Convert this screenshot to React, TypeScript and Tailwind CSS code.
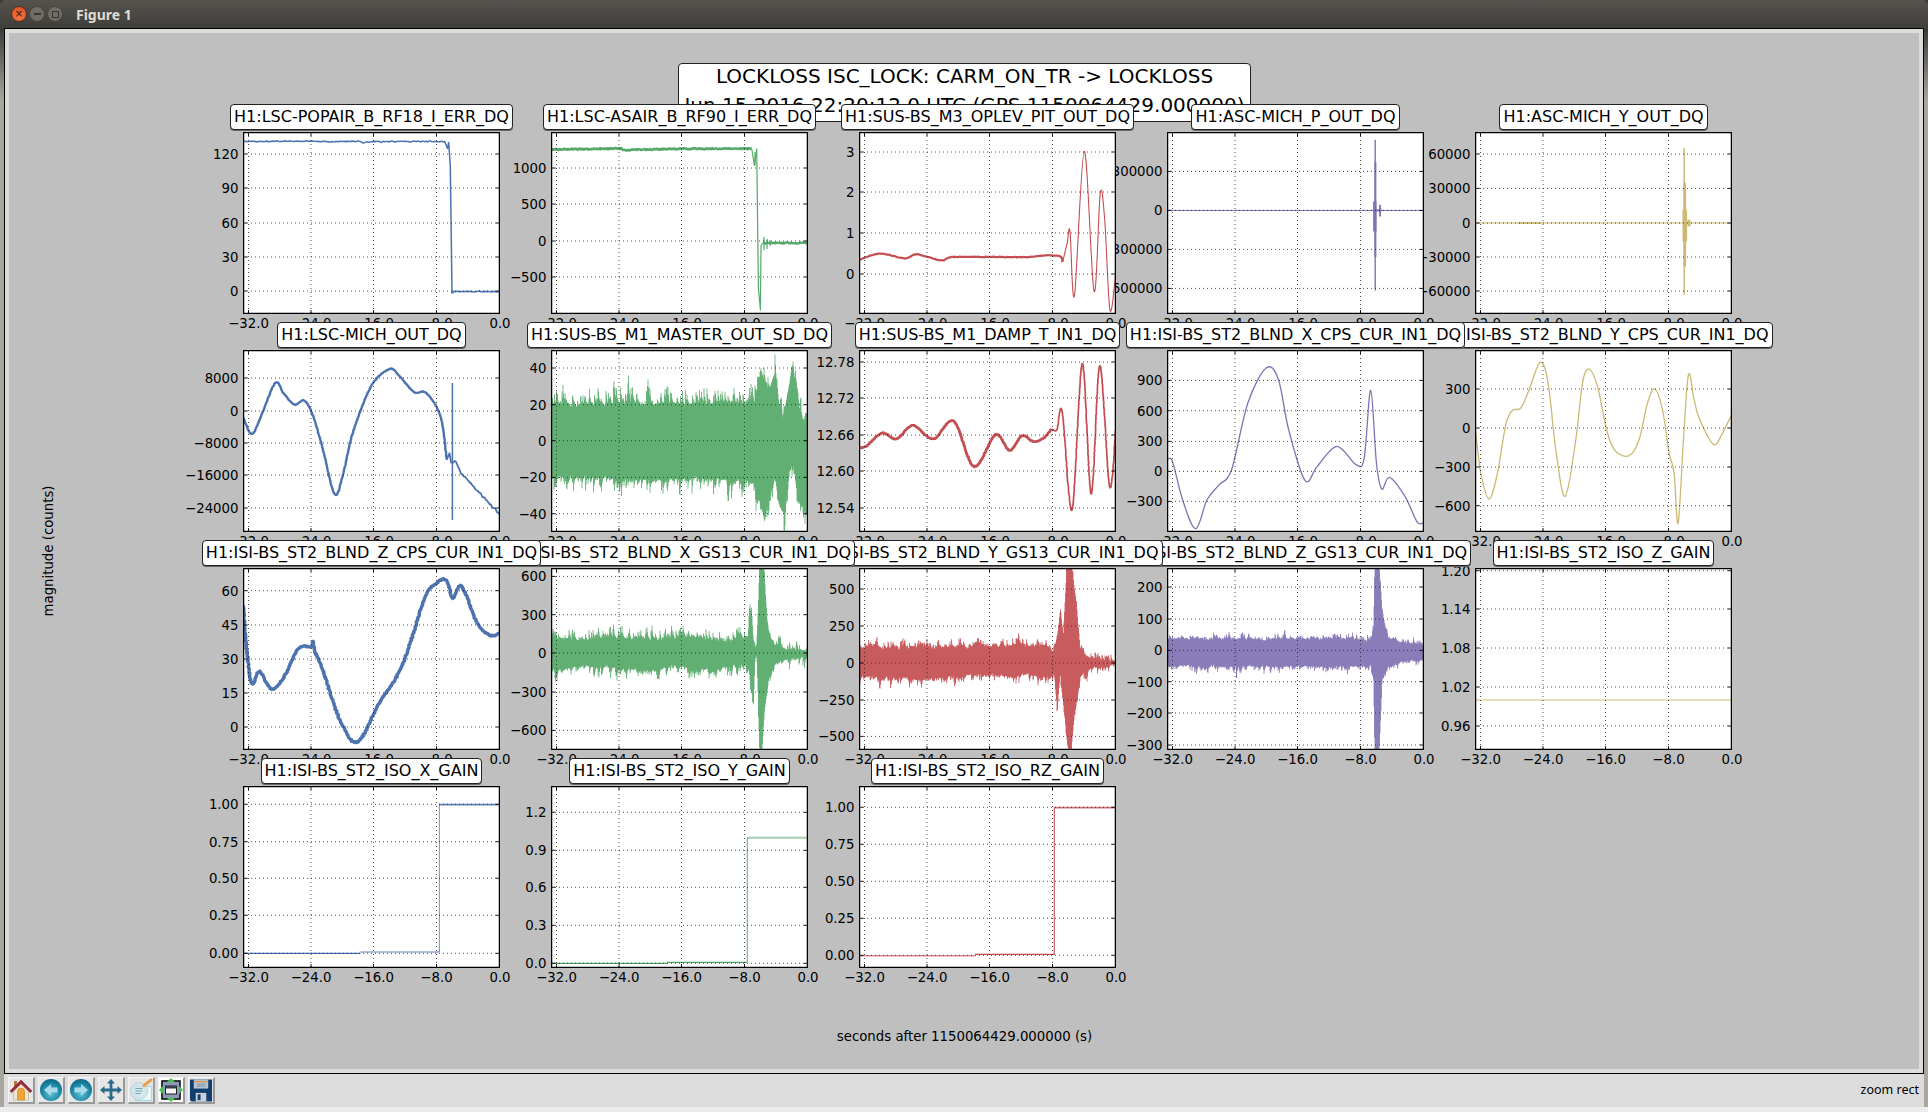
import React from "react";

type P = [number, number];
type Stroke = { d: string; w: number; o?: number };
type Ax = {
  title: string;
  color: string;
  z: string;
  yt: [string, number][];
  tr: Stroke[];
};

const W = 257;
const H = 182;
const XT: [string, number][] = [
  ["−32.0", 5.5],
  ["−24.0", 68],
  ["−16.0", 130.5],
  ["−8.0", 193.5],
  ["0.0", 257],
];

function rng(seed: number) {
  let a = seed >>> 0;
  return () => {
    a = (a + 0x6d2b79f5) >>> 0;
    let t = a;
    t = Math.imul(t ^ (t >>> 15), t | 1);
    t ^= t + Math.imul(t ^ (t >>> 7), t | 61);
    return ((t ^ (t >>> 14)) >>> 0) / 4294967296;
  };
}
const zp = (sx: number, ox: number, oy: number, pts: P[]): P[] =>
  pts.map(([x, y]) => [x / sx + ox, y / 3 + oy] as P);
const f = (n: number) => n.toFixed(2);
function smooth(pts: P[]) {
  let d = `M${f(pts[0][0])} ${f(pts[0][1])}`;
  for (let i = 0; i < pts.length - 1; i++) {
    const p0 = pts[Math.max(i - 1, 0)];
    const p1 = pts[i];
    const p2 = pts[i + 1];
    const p3 = pts[Math.min(i + 2, pts.length - 1)];
    d += `C${f(p1[0] + (p2[0] - p0[0]) / 6)} ${f(p1[1] + (p2[1] - p0[1]) / 6)} ${f(p2[0] - (p3[0] - p1[0]) / 6)} ${f(p2[1] - (p3[1] - p1[1]) / 6)} ${f(p2[0])} ${f(p2[1])}`;
  }
  return d;
}
const poly = (pts: P[]) => "M" + pts.map((p) => `${f(p[0])} ${f(p[1])}`).join("L");
function rough(pts: P[], amp: number, seed: number) {
  const r = rng(seed);
  const out: P[] = [];
  for (let i = 0; i < pts.length - 1; i++) {
    const p0 = pts[Math.max(i - 1, 0)];
    const p1 = pts[i];
    const p2 = pts[i + 1];
    const p3 = pts[Math.min(i + 2, pts.length - 1)];
    const c1: P = [p1[0] + (p2[0] - p0[0]) / 6, p1[1] + (p2[1] - p0[1]) / 6];
    const c2: P = [p2[0] - (p3[0] - p1[0]) / 6, p2[1] - (p3[1] - p1[1]) / 6];
    const n = Math.max(2, Math.ceil(Math.hypot(p2[0] - p1[0], p2[1] - p1[1]) / 1.2));
    for (let j = 0; j < n; j++) {
      const t = j / n;
      const u = 1 - t;
      const x = u * u * u * p1[0] + 3 * u * u * t * c1[0] + 3 * u * t * t * c2[0] + t * t * t * p2[0];
      const y = u * u * u * p1[1] + 3 * u * u * t * c1[1] + 3 * u * t * t * c2[1] + t * t * t * p2[1];
      out.push([x + (r() - 0.5) * amp, y + (r() - 0.5) * amp]);
    }
  }
  out.push(pts[pts.length - 1]);
  return poly(out);
}
function interp(k: P[], x: number) {
  if (x <= k[0][0]) return k[0][1];
  for (let i = 0; i < k.length - 1; i++) {
    if (x <= k[i + 1][0]) {
      const t = (x - k[i][0]) / (k[i + 1][0] - k[i][0] || 1);
      return k[i][1] + (k[i + 1][1] - k[i][1]) * t;
    }
  }
  return k[k.length - 1][1];
}
function jitter(pts: P[], amp: number, seed: number) {
  const r = rng(seed);
  const out: P[] = [];
  for (let i = 0; i < pts.length - 1; i++) {
    const [x0, y0] = pts[i];
    const [x1, y1] = pts[i + 1];
    const n = Math.max(1, Math.floor(Math.abs(x1 - x0)));
    for (let j = 0; j < n; j++) {
      const t = j / n;
      out.push([x0 + (x1 - x0) * t, y0 + (y1 - y0) * t + (r() - 0.5) * amp]);
    }
  }
  out.push(pts[pts.length - 1]);
  return poly(out);
}
function band(seed: number, top: P[], bot: P[], sT: number, sB: number, base: number, wobble: number) {
  const r = rng(seed);
  let d = "";
  let tw = 0;
  let bw = 0;
  let sl = 0;
  let sl2 = 0;
  for (let x = 0; x <= W; x += 0.5) {
    tw = tw * 0.55 + Math.pow(r(), 6) * 1.1;
    bw = bw * 0.55 + Math.pow(r(), 6) * 1.1;
    sl = sl * 0.97 + (r() - 0.5) * 0.6;
    sl2 = sl2 * 0.97 + (r() - 0.5) * 0.6;
    const t0 = interp(top, x);
    const b0 = interp(bot, x);
    const scale = Math.min(1, (b0 - t0) / 30) * wobble;
    const t = t0 - tw * sT - (r() - 0.5) * base - sl * scale;
    const b = b0 + bw * sB + (r() - 0.5) * base + sl2 * scale;
    d += `M${x} ${f(t)}V${f(b)}`;
  }
  return d;
}

const a3 = zp(2.45, -219.6, -82.3, [
  [538, 630], [590, 612], [650, 626], [680, 614], [740, 632], [770, 622], [900, 622], [950, 622], [1000, 617], [1030, 620], [1037, 637], [1048, 580], [1055, 545], [1066, 737], [1090, 305], [1114, 725], [1129, 432], [1140, 510], [1153, 782], [1168, 660],
]);
const a6a = zp(2.45, -43.3, -20.3, [
  [100, 250], [107, 265], [128, 313], [150, 260], [185, 160], [205, 190], [232, 225], [255, 212], [275, 250], [300, 350], [330, 492], [350, 440], [375, 310], [420, 170], [465, 118], [490, 140], [525, 187], [555, 190], [590, 260], [605, 390],
]);
const a6b = zp(2.45, -43.3, -20.3, [[605, 390], [612, 370], [616, 398], [628, 396], [640, 430], [738, 558]]);
const a8a = zp(2.45, -19.6, -20.3, [
  [46, 353], [65, 350], [105, 310], [140, 328], [180, 287], [230, 328], [280, 275], [330, 410], [382, 315], [417, 362], [447, 318], [475, 335], [500, 325], [520, 298],
]);
const a8b = zp(2.45, -19.6, -20.3, [
  [520, 298], [533, 300], [546, 247], [570, 540], [595, 102], [617, 492], [638, 108], [662, 470], [677, 300],
]);
const a9 = zp(2.45, -327.3, -20.3, [
  [801, 392], [815, 395], [840, 510], [872, 597], [900, 510], [930, 465], [960, 420], [1000, 220], [1045, 115], [1075, 150], [1100, 300], [1140, 452], [1170, 410], [1218, 350], [1265, 405], [1285, 385], [1301, 182], [1315, 400], [1328, 478], [1347, 443], [1385, 500], [1415, 577], [1432, 578],
]);
const a10 = zp(3, -14.2, -10.3, [
  [45, 280], [60, 400], [85, 478], [110, 400], [135, 255], [155, 212], [180, 205], [205, 150], [238, 68], [262, 130], [285, 330], [313, 470], [345, 300], [365, 130], [385, 88], [410, 140], [440, 280], [465, 335], [505, 348], [535, 300], [560, 190], [582, 148], [605, 210], [625, 340], [640, 400], [652, 550], [668, 300], [683, 105], [700, 180], [715, 235], [758, 314], [785, 280], [814, 222],
]);
const a11 = zp(2.45, -43.3, -28.3, [
  [107, 200], [112, 290], [127, 430], [147, 395], [175, 448], [205, 415], [240, 330], [265, 320], [275, 322], [278, 305], [282, 335], [300, 385], [340, 530], [385, 608], [440, 490], [495, 380], [550, 180], [575, 135], [603, 120], [620, 175], [642, 140], [680, 250], [712, 287], [738, 278],
]);

const g7 = (p: P[]) => zp(2.45, 200 - 551.4, -20.3, p);
const g12 = (p: P[]) => zp(2.45, 200 - 551.4, -28.3, p);
const g13 = (p: P[]) => zp(1.742, 840 - 859.6, -28.3, p);
const g14 = (p: P[]) => zp(1.742, 840 - 1167.3, -28.3, p);

const AXES: Ax[] = [
  {
    title: "H1:LSC-POPAIR_B_RF18_I_ERR_DQ", color: "#4c72b0", z: "z-[44]",
    yt: [["120", 22], ["90", 56], ["60", 91], ["30", 125], ["0", 159]],
    tr: [{ d: jitter([[0, 9.6], [60, 9], [80, 9.5], [118, 9.4], [120, 10.8], [130, 9.5], [137, 9.4], [138, 10.8], [140, 9.6], [201.6, 9.4], [204.5, 16.7], [205.7, 10.4], [207.3, 34], [209, 161], [211, 159.4], [257, 159.6]], 1, 3), w: 1.5 }],
  },
  {
    title: "H1:LSC-ASAIR_B_RF90_I_ERR_DQ", color: "#55a868", z: "z-[43]",
    yt: [["1000", 36], ["500", 72], ["0", 109], ["−500", 145]],
    tr: [
      { d: jitter([[0, 17.5], [70, 16.5], [73, 18], [130, 16.8], [200.8, 16.7]], 1.2, 5), w: 2.6 },
      { d: poly([[200.8, 17], [203.3, 33], [205.7, 17], [207.4, 156], [209.4, 178], [210, 114], [212, 111]]), w: 1.2 },
      { d: jitter([[212, 111], [257, 111]], 1.2, 7), w: 2.4 },
      { d: "M204 20V34M213 105V118M216 107V117M219 108V114", w: 1.2 },
    ],
  },
  {
    title: "H1:SUS-BS_M3_OPLEV_PIT_OUT_DQ", color: "#c44e52", z: "z-[42]",
    yt: [["3", 20], ["2", 60], ["1", 101], ["0", 142]],
    tr: [{ d: rough(a3.slice(0, 11), 0.6, 9), w: 2.2 }, { d: smooth(a3.slice(10)), w: 1.1 }],
  },
  {
    title: "H1:ASC-MICH_P_OUT_DQ", color: "#8172b2", z: "z-[41]",
    yt: [["300000", 39.4], ["0", 78.4], ["−300000", 117.4], ["−600000", 156.4]],
    tr: [
      { d: "M0 78.4H257", w: 1 },
      { d: "M208.2 7.7V158.4", w: 1.4 },
      { d: "M208.4 30V125", w: 2 },
      { d: "M207.8 69.4V99.4", w: 3.4 },
      { d: "M213 72.7V84.4", w: 1.8 },
      { d: "M209 78.4H215", w: 2 },
    ],
  },
  {
    title: "H1:ASC-MICH_Y_OUT_DQ", color: "#ccb974", z: "z-[40]",
    yt: [["60000", 22], ["30000", 56.4], ["0", 91], ["−30000", 125], ["−60000", 159]],
    tr: [
      { d: "M0 91H257", w: 1 },
      { d: "M43 91H66", w: 1.6 },
      { d: "M209.2 16V162.7", w: 1.5 },
      { d: "M209.8 51V134.4", w: 2.6 },
      { d: "M209.8 77.7V109.4", w: 4.6 },
      { d: "M214 87.7V94.4", w: 3 },
    ],
  },
  {
    title: "H1:LSC-MICH_OUT_DQ", color: "#4c72b0", z: "z-[39]",
    yt: [["8000", 28], ["0", 61], ["−8000", 93], ["−16000", 125], ["−24000", 158]],
    tr: [
      { d: rough(a6a, 0.5, 13), w: 2.4 },
      { d: jitter(a6b, 2, 11), w: 1.8 },
      { d: "M209.4 33V170", w: 1.5 },
    ],
  },
  {
    title: "H1:SUS-BS_M1_MASTER_OUT_SD_DQ", color: "#55a868", z: "z-[38]",
    yt: [["40", 18], ["20", 54.7], ["0", 90.7], ["−20", 127.4], ["−40", 163.7]],
    tr: [{
      d: band(21,
        g7([[862, 228], [1340, 224], [1360, 222], [1375, 125], [1395, 195], [1410, 135], [1420, 235], [1430, 290], [1440, 210], [1452, 125], [1465, 195], [1475, 295], [1487, 255]]),
        g7([[862, 440], [1340, 445], [1360, 465], [1385, 565], [1400, 460], [1410, 430], [1420, 520], [1432, 545], [1445, 420], [1455, 385], [1465, 500], [1480, 535], [1487, 520]]),
        16, 16, 2, 2), w: 0.8,
    }],
  },
  {
    title: "H1:SUS-BS_M1_DAMP_T_IN1_DQ", color: "#c44e52", z: "z-[37]",
    yt: [["12.78", 12], ["12.72", 48], ["12.66", 85], ["12.60", 121], ["12.54", 158]],
    tr: [{ d: rough(a8a, 0.7, 17), w: 2.8 }, { d: rough(a8b, 0.5, 19), w: 1.7 }],
  },
  {
    title: "H1:ISI-BS_ST2_BLND_X_CPS_CUR_IN1_DQ", color: "#8172b2", z: "z-[36]",
    yt: [["900", 30.4], ["600", 60.7], ["300", 91.4], ["0", 121.4], ["−300", 151.4]],
    tr: [{ d: smooth(a9), w: 1.3 }],
  },
  {
    title: "H1:ISI-BS_ST2_BLND_Y_CPS_CUR_IN1_DQ", color: "#ccb974", z: "z-[35]",
    yt: [["300", 39], ["0", 78], ["−300", 117], ["−600", 155.7]],
    tr: [{ d: smooth(a10), w: 1.3 }],
  },
  {
    title: "H1:ISI-BS_ST2_BLND_Z_CPS_CUR_IN1_DQ", color: "#4c72b0", z: "z-[34]",
    yt: [["60", 22.7], ["45", 57], ["30", 91], ["15", 125], ["0", 159]],
    tr: [{ d: rough(a11, 1.1, 23), w: 3.4 }],
  },
  {
    title: "H1:ISI-BS_ST2_BLND_X_GS13_CUR_IN1_DQ", color: "#55a868", z: "z-[33]",
    yt: [["600", 8.4], ["300", 46.7], ["0", 85], ["−300", 124], ["−600", 162.4]],
    tr: [{
      d: band(31,
        g12([[862, 300], [1338, 303], [1344, 300], [1347, 215], [1352, 225], [1358, 320], [1364, 330], [1369, 200], [1372, 85], [1383, 85], [1390, 240], [1398, 290], [1410, 315], [1430, 325], [1487, 338]]),
        g12([[862, 385], [1338, 382], [1345, 390], [1350, 440], [1357, 500], [1361, 360], [1365, 350], [1369, 500], [1372, 630], [1378, 630], [1384, 520], [1395, 420], [1410, 375], [1430, 360], [1487, 350]]),
        9, 9, 2, 2.5), w: 0.8,
    }],
  },
  {
    title: "H1:ISI-BS_ST2_BLND_Y_GS13_CUR_IN1_DQ", color: "#c44e52", z: "z-[32]",
    yt: [["500", 21], ["250", 58], ["0", 95], ["−250", 132], ["−500", 168.4]],
    tr: [{
      d: band(41,
        g13([[35, 325], [368, 325], [374, 345], [380, 290], [385, 215], [390, 290], [396, 85], [404, 85], [412, 180], [420, 340], [440, 358], [480, 366]]),
        g13([[35, 412], [368, 415], [374, 395], [379, 505], [385, 400], [392, 520], [398, 630], [403, 630], [410, 520], [420, 410], [440, 383], [480, 374]]),
        7, 7, 2, 2.5), w: 0.8,
    }],
  },
  {
    title: "H1:ISI-BS_ST2_BLND_Z_GS13_CUR_IN1_DQ", color: "#8172b2", z: "z-[31]",
    yt: [["200", 19], ["100", 51], ["0", 82.4], ["−100", 113.7], ["−200", 145], ["−300", 177]],
    tr: [
      {
        d: band(51,
          g14([[572, 298], [925, 300], [930, 270], [932, 85], [940, 85], [945, 220], [955, 295], [980, 312], [1016, 318]]),
          g14([[572, 376], [925, 378], [930, 420], [932, 630], [940, 630], [945, 420], [955, 380], [980, 365], [1016, 360]]),
          5, 5, 2, 1), w: 0.8,
      },
      { d: "M69.5 85V110", w: 1 },
    ],
  },
  {
    title: "H1:ISI-BS_ST2_ISO_Z_GAIN", color: "#ccb974", z: "z-[30]",
    yt: [["1.20", 2.7], ["1.14", 41], ["1.08", 80], ["1.02", 119], ["0.96", 158]],
    tr: [{ d: "M0 132H257", w: 1.1 }],
  },
  {
    title: "H1:ISI-BS_ST2_ISO_X_GAIN", color: "#4c72b0", z: "z-[29]",
    yt: [["1.00", 18.3], ["0.75", 55.7], ["0.50", 92.3], ["0.25", 129.3], ["0.00", 167.3]],
    tr: [
      { d: "M0 167.3H117.5", w: 1.2, o: 1 },
      { d: "M117.5 166H196.4", w: 1.6, o: 0.6 },
      { d: "M196.4 166V18.3H257", w: 1.1, o: 0.7 },
      { d: "M196.4 18.8H257", w: 2, o: 0.6 },
    ],
  },
  {
    title: "H1:ISI-BS_ST2_ISO_Y_GAIN", color: "#55a868", z: "z-[28]",
    yt: [["1.2", 26.3], ["0.9", 64.3], ["0.6", 101.3], ["0.3", 139.3], ["0.0", 177.3]],
    tr: [
      { d: "M0 177.3H116M116 176.3H196.3", w: 1.3, o: 1 },
      { d: "M196.3 176.3V51.7", w: 1.2, o: 0.8 },
      { d: "M196.3 51.7H257", w: 2, o: 0.55 },
    ],
  },
  {
    title: "H1:ISI-BS_ST2_ISO_RZ_GAIN", color: "#c44e52", z: "z-[27]",
    yt: [["1.00", 21.3], ["0.75", 58.3], ["0.50", 95.3], ["0.25", 132.3], ["0.00", 169.3]],
    tr: [
      { d: "M0 169.7H116", w: 1.6, o: 0.65 },
      { d: "M116 168.4H195.3V21.6", w: 1.1, o: 1 },
      { d: "M195.3 21.6H257", w: 1.8, o: 0.8 },
    ],
  },
];

function Axes({ a }: { a: Ax }) {
  return (
    <div className="relative w-[257px] h-[182px]">
      <svg width={W} height={H} className="absolute inset-0 z-0 overflow-visible text-[13.3px] fill-black">
        {XT.map(([l, x]) => (
          <text key={l} x={x} y={195.5} textAnchor="middle">{l}</text>
        ))}
        {a.yt.map(([l, y]) => (
          <text key={l} x={-4.5} y={y + 4.8} textAnchor="end">{l}</text>
        ))}
      </svg>
      <svg width={W} height={H} className="absolute inset-0 z-10 bg-white">
        <g fill="none" stroke={a.color} strokeLinejoin="round">
          {a.tr.map((t, i) => (
            <path key={i} d={t.d} strokeWidth={t.w} strokeOpacity={t.o ?? 1} />
          ))}
        </g>
        <g stroke="#222" strokeWidth={0.8} strokeDasharray="1 3" fill="none">
          {XT.map(([l, x]) => (
            <line key={l} x1={x} x2={x} y1={0} y2={H} />
          ))}
          {a.yt.map(([l, y]) => (
            <line key={l} x1={0} x2={W} y1={y} y2={y} />
          ))}
        </g>
        <g stroke="#000" strokeWidth={0.9}>
          {XT.map(([l, x]) => (
            <path key={l} d={`M${x} 0v4M${x} ${H}v-4`} />
          ))}
          {a.yt.map(([l, y]) => (
            <path key={l} d={`M0 ${y}h4M${W} ${y}h-4`} />
          ))}
        </g>
        <rect x={0.6} y={0.6} width={W - 1.2} height={H - 1.2} fill="none" stroke="#000" strokeWidth={1.3} />
      </svg>
      <div className={`absolute left-[-120px] right-[-120px] bottom-[calc(100%+2px)] flex justify-center ${a.z}`}>
        <div className="h-[26px] px-[3px] flex items-center whitespace-nowrap bg-white border border-[#222] rounded-[4px] text-[16px] text-black shadow-[0_1px_0_#666]">
          {a.title}
        </div>
      </div>
    </div>
  );
}

function Btn({ children, white }: { children: React.ReactNode; white?: boolean }) {
  return (
    <div className={`w-[27px] h-[27px] flex items-center justify-center border-t border-l border-t-[#f4f4f4] border-l-[#f4f4f4] border-r-2 border-b-2 border-r-[#9a9a9a] border-b-[#9a9a9a] ${white ? "bg-white" : "bg-[#e6e6e6]"}`}>
      {children}
    </div>
  );
}

const Home = () => (
  <svg width="24" height="24" viewBox="0 0 24 24">
    <rect x="5" y="3" width="3" height="6" fill="#b5763e" />
    <path d="M4.500 12L12 5l7.500 7v10h-15z" fill="#f1e7cf" stroke="#b9ab88" strokeWidth="0.6" />
    <path d="M1 13L12 2l11 11-1.800 1.600L12 5.800 2.800 14.600z" fill="#9c2a3a" stroke="#7a1c2a" strokeWidth="0.5" />
    <path d="M8.500 22V13.500a3.500 3.500 0 0 1 7 0V22z" fill="#f0a433" stroke="#c77f1c" strokeWidth="0.6" />
  </svg>
);
const Nav = ({ dir }: { dir: "l" | "r" }) => (
  <svg width="24" height="24" viewBox="0 0 24 24">
    <defs>
      <radialGradient id={`nav${dir}`} cx="0.5" cy="0.65" r="0.6">
        <stop offset="0" stopColor="#5ec0d4" />
        <stop offset="0.7" stopColor="#1d88a6" />
        <stop offset="1" stopColor="#126d8c" />
      </radialGradient>
    </defs>
    <circle cx="12" cy="12" r="11" fill={`url(#nav${dir})`} />
    <path
      d={dir === "l" ? "M5 12l7-6v3.500h6.500v5H12V18z" : "M19 12l-7-6v3.500H5.500v5H12V18z"}
      fill="#a8dbe7"
    />
  </svg>
);
const Move = () => (
  <svg width="24" height="24" viewBox="0 0 24 24" fill="#2b6a8c">
    <path d="M12 1l4 4.500h-2.600v5.100h5.100V8L23 12l-4.500 4v-2.600h-5.100v5.100H16L12 23l-4-4.500h2.600v-5.100H5.500V16L1 12l4.500-4v2.600h5.100V5.500H8z" />
  </svg>
);
const Zoom = () => (
  <svg width="24" height="24" viewBox="0 0 24 24">
    <rect x="6.500" y="8.500" width="16" height="14" fill="#eef8fb" stroke="#a5dbe6" strokeWidth="1.2" />
    <circle cx="10" cy="13" r="8.500" fill="#cfe5ea" fillOpacity="0.9" stroke="#b9d3da" strokeWidth="1" />
    <path d="M6.500 10.500h7M6.500 13h7M6.500 15.500h5" stroke="#7da4b0" strokeWidth="1.1" />
    <path d="M15 7.500L22 2" stroke="#e8a04a" strokeWidth="3" strokeLinecap="round" />
  </svg>
);
const Sub = () => (
  <svg width="24" height="24" viewBox="0 0 24 24">
    <rect x="3" y="3" width="18" height="18" fill="#8b9bb5" stroke="#111" strokeWidth="1.6" />
    <rect x="6.500" y="8" width="11" height="8" fill="#f4f4f4" stroke="#222" strokeWidth="1" />
    <rect x="6.500" y="8" width="11" height="2.500" fill="#33404f" />
    <path d="M12 0l4 4H8zM12 24l4-4H8zM0 12l4-4v8zM24 12l-4-4v8z" fill="#45c24a" />
  </svg>
);
const Save = () => (
  <svg width="25" height="25" viewBox="0 0 25 25">
    <path d="M1 1h23v23H2.500L1 22.500z" fill="#123f6d" />
    <rect x="5" y="1" width="15" height="9.500" fill="#b6c3d2" />
    <rect x="5" y="2.500" width="15" height="1.500" fill="#d99a55" />
    <path d="M8 6h9M8 8h9" stroke="#7d8da0" strokeWidth="0.9" />
    <rect x="7" y="15" width="11" height="9" fill="#c9d1da" />
    <rect x="9" y="16.500" width="3" height="6" fill="#123f6d" />
  </svg>
);

export default function App() {
  return (
    <div className="w-[1928px] h-[1112px] overflow-hidden flex flex-col font-['DejaVu_Sans',sans-serif] bg-[linear-gradient(#3c3b37_30px,#a9a69e_100px)]">
      {/* window title bar */}
      <div className="h-[28px] shrink-0 flex items-center bg-[linear-gradient(#55534e,#3f3e3a)] rounded-t-[6px] pl-[11px]">
        <div className="flex items-center gap-[2px]">
          <div className="w-[16px] h-[16px] rounded-full bg-[radial-gradient(circle_at_50%_70%,#f47a46,#d94a1f)] border border-[#5a3020] flex items-center justify-center text-[10px] leading-none text-[#5a2412] font-bold">×</div>
          <div className="w-[16px] h-[16px] rounded-full bg-[#6f6d66] border border-[#45443f] flex items-center justify-center">
            <div className="w-[7px] h-[2px] bg-[#35342f]" />
          </div>
          <div className="w-[16px] h-[16px] rounded-full bg-[#6f6d66] border border-[#45443f] flex items-center justify-center">
            <div className="w-[7px] h-[7px] border border-[#35342f]" />
          </div>
        </div>
        <div className="ml-[13px] text-[14px] font-bold text-[#dfdbd2] font-['Noto_Sans',sans-serif]">Figure 1</div>
      </div>

      {/* figure */}
      <div className="flex-1 mx-[4px] border border-black p-[4px] bg-[#dcdcdc] flex min-h-0">
        <div className="relative flex-1 bg-[#bfbfbf] pl-[234px] pt-[99px]">
          <div className="grid grid-cols-[repeat(5,257px)] auto-rows-[182px] gap-x-[51px] gap-y-[36px]">
            {AXES.map((a) => (
              <Axes key={a.title} a={a} />
            ))}
          </div>

          {/* suptitle */}
          <div className="absolute z-[20] left-[669px] top-[30px] w-[573px] h-[59px] bg-white border border-[#222] rounded-[4px] text-center text-[20px] leading-[24px] text-black whitespace-nowrap overflow-hidden">
            <div>LOCKLOSS ISC_LOCK: CARM_ON_TR -&gt; LOCKLOSS</div>
            <div className="mt-[5px]">Jun 15 2016 22:20:12.0 UTC (GPS 1150064429.000000)</div>
          </div>

          <div className="absolute left-[32px] top-[518px] w-[14px] h-0 flex items-center justify-center">
            <div className="-rotate-90 whitespace-nowrap text-[13.3px] text-black">magnitude (counts)</div>
          </div>
          <div className="absolute left-0 right-0 top-[994px] pl-[1px] text-center text-[13.3px] text-black">
            seconds after 1150064429.000000 (s)
          </div>
        </div>
      </div>

      {/* toolbar */}
      <div className="h-[33px] shrink-0 mx-[4px] bg-[#dcdcdc] flex items-center pl-[4px] pr-[5px] gap-[3px]">
        <Btn><Home /></Btn>
        <Btn><Nav dir="l" /></Btn>
        <Btn><Nav dir="r" /></Btn>
        <Btn><Move /></Btn>
        <Btn><Zoom /></Btn>
        <Btn white><Sub /></Btn>
        <Btn><Save /></Btn>
        <div className="ml-auto text-[12.5px] text-black font-['Noto_Sans',sans-serif]">zoom rect</div>
      </div>
      <div className="h-[5px] shrink-0 bg-[#ececec]" />
    </div>
  );
}
